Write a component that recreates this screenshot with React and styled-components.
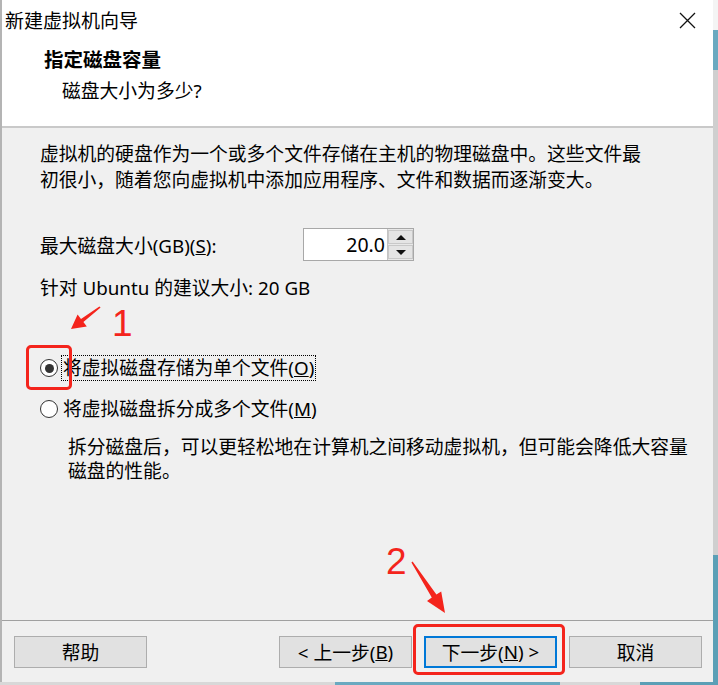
import React from "react";
import styled, { createGlobalStyle } from "styled-components";

const GlobalStyle = createGlobalStyle`
  html, body {
    margin: 0;
    padding: 0;
  }
  body {
    font-family: "Noto Sans", "Noto Sans CJK SC", sans-serif;
    color: #000;
  }
`;

const Screen = styled.div`
  position: relative;
  width: 718px;
  height: 685px;
  overflow: hidden;
  background:
    linear-gradient(to bottom, #f4f4f4 0 30px, #6aa9c0 30px 70px, #cfcfcf 70px 555px, #5b9fb6 555px) right top / 5px 685px no-repeat,
    linear-gradient(to right, #d8d8d8 0 335px, #6aa9c0 335px 560px, #d8d8d8 560px 640px, #5b9fb6 640px) left bottom / 718px 3px no-repeat,
    #d8d8d8;
`;

const Window = styled.div`
  box-sizing: border-box;
  width: 713px;
  height: 682px;
  display: flex;
  flex-direction: column;
  background: #f0f0f0;
  border-left: 2px solid #b4b4b4;
`;

const TitleBar = styled.div`
  height: 40px;
  display: flex;
  align-items: center;
  justify-content: space-between;
  padding: 0 17px 0 3px;
  background: #fff;
  font-size: 19px;
`;

const CloseIcon = styled.svg`
  width: 17px;
  height: 17px;
`;

const Header = styled.div`
  background: #fff;
  height: 88px;
  box-sizing: border-box;
  padding: 8px 0 0 42px;
  border-bottom: 2px solid #c9c9c9;
`;

const HeaderTitle = styled.div`
  font-size: 19.5px;
  font-weight: 700;
  line-height: 24px;
`;

const HeaderSub = styled.div`
  margin: 7px 0 0 18px;
  font-size: 18.8px;
  line-height: 24px;
`;

const Body = styled.div`
  flex: 1;
  padding: 13px 0 0 38px;
  font-size: 18.8px;
`;

const Paragraph = styled.p`
  margin: 0;
  line-height: 26px;
  white-space: nowrap;
`;

const SizeRow = styled.div`
  display: grid;
  grid-template-columns: 263px auto;
  align-items: center;
  margin-top: 35px;
  height: 33px;
`;

const SpinBox = styled.div`
  display: flex;
  width: 111px;
  height: 33px;
  box-sizing: border-box;
  border: 1px solid #a8a8a8;
  background: #fff;
`;

const SpinValue = styled.div`
  flex: 1;
  text-align: right;
  padding-right: 2px;
  line-height: 31px;
  font-size: 19.5px;
`;

const SpinButtons = styled.div`
  width: 25px;
  display: flex;
  flex-direction: column;
  gap: 1px;
  padding: 1px 0;
  background: #e8e8e8;
  border-left: 1px solid #c4c4c4;
`;

const SpinButton = styled.div`
  flex: 1;
  display: flex;
  align-items: center;
  justify-content: center;
  background: #e4e4e4;
  border: 1px solid #c8c8c8;
  &::after {
    content: "";
    border-left: 5px solid transparent;
    border-right: 5px solid transparent;
    ${(p) =>
      p.$down
        ? "border-top: 5px solid #111;"
        : "border-bottom: 5px solid #111;"}
  }
`;

const Line = styled.div`
  line-height: 26px;
  margin-top: ${(p) => p.$top || 0}px;
`;

const RadioRow = styled.label`
  display: flex;
  align-items: center;
  height: 26px;
  margin-top: ${(p) => p.$top}px;
`;

const RadioDot = styled.span`
  box-sizing: border-box;
  width: 18px;
  height: 18px;
  border-radius: 50%;
  border: 1.5px solid #333;
  background: #fff;
  margin-right: 4px;
  display: flex;
  align-items: center;
  justify-content: center;
  &::after {
    content: "";
    width: 9px;
    height: 9px;
    border-radius: 50%;
    background: ${(p) => (p.$checked ? "#333" : "transparent")};
  }
`;

const RadioText = styled.span`
  line-height: 24px;
  padding: 0 1px;
  outline: ${(p) => (p.$focus ? "1px dotted #000" : "none")};
`;

const Desc = styled.div`
  margin: 13px 0 0 28px;
  line-height: 24px;
  white-space: nowrap;
`;

const Footer = styled.div`
  display: flex;
  align-items: center;
  gap: 12px;
  padding: 15px 11px 14px 12px;
  border-top: 1px solid #a0a0a0;
`;

const Button = styled.div`
  box-sizing: border-box;
  width: 133px;
  height: 32px;
  display: flex;
  align-items: center;
  justify-content: center;
  background: #e1e1e1;
  border: ${(p) => (p.$primary ? "2px solid #0078d7" : "1px solid #adadad")};
  font-size: 18.8px;
  margin-left: ${(p) => (p.$push ? "auto" : "0")};
`;

const Marker = styled.div`
  position: absolute;
  box-sizing: border-box;
  border: 3px solid #f4241c;
  border-radius: 5px;
  left: ${(p) => p.$x}px;
  top: ${(p) => p.$y}px;
  width: ${(p) => p.$w}px;
  height: ${(p) => p.$h}px;
`;

const Num = styled.div`
  position: absolute;
  left: ${(p) => p.$x}px;
  top: ${(p) => p.$y}px;
  color: #f4241c;
  font-family: "Liberation Sans", sans-serif;
  font-size: 37px;
  line-height: 37px;
`;

const Arrow = styled.svg`
  position: absolute;
  left: 0;
  top: 0;
  width: 718px;
  height: 685px;
  pointer-events: none;
`;

export default function App() {
  return (
    <>
      <GlobalStyle />
      <Screen>
        <Window>
          <TitleBar>
            <span>新建虚拟机向导</span>
            <CloseIcon viewBox="0 0 17 17">
              <path d="M1 1 L16 16 M16 1 L1 16" stroke="#111" strokeWidth="1.3" />
            </CloseIcon>
          </TitleBar>
          <Header>
            <HeaderTitle>指定磁盘容量</HeaderTitle>
            <HeaderSub>磁盘大小为多少?</HeaderSub>
          </Header>
          <Body>
            <Paragraph>
              虚拟机的硬盘作为一个或多个文件存储在主机的物理磁盘中。这些文件最
              <br />
              初很小，随着您向虚拟机中添加应用程序、文件和数据而逐渐变大。
            </Paragraph>
            <SizeRow>
              <span>
                最大磁盘大小(GB)(<u>S</u>):
              </span>
              <SpinBox>
                <SpinValue>20.0</SpinValue>
                <SpinButtons>
                  <SpinButton />
                  <SpinButton $down />
                </SpinButtons>
              </SpinBox>
            </SizeRow>
            <Line $top={14}>针对 Ubuntu 的建议大小: 20 GB</Line>
            <RadioRow $top={54}>
              <RadioDot $checked />
              <RadioText $focus>
                将虚拟磁盘存储为单个文件(<u>O</u>)
              </RadioText>
            </RadioRow>
            <RadioRow $top={15}>
              <RadioDot />
              <RadioText>
                将虚拟磁盘拆分成多个文件(<u>M</u>)
              </RadioText>
            </RadioRow>
            <Desc>
              拆分磁盘后，可以更轻松地在计算机之间移动虚拟机，但可能会降低大容量
              <br />
              磁盘的性能。
            </Desc>
          </Body>
          <Footer>
            <Button>帮助</Button>
            <Button $push>
              &lt; 上一步(<u>B</u>)
            </Button>
            <Button $primary>
              下一步(<u>N</u>) &gt;
            </Button>
            <Button>取消</Button>
          </Footer>
        </Window>

        <Marker $x={26} $y={345} $w={46} $h={45} />
        <Marker $x={413} $y={624} $w={152} $h={51} />
        <Num $x={112} $y={305}>1</Num>
        <Num $x={386} $y={543}>2</Num>
        <Arrow viewBox="0 0 718 685">
          <polygon
            points="100.6,307.6 83.4,322.1 86.8,326.4 71,329 77.6,314.6 81,318.9 99.4,306.4"
            fill="#f4241c"
          />
          <polygon
            points="412.6,561.6 436.4,594.6 441.2,591.6 445,613 427,600.9 431.8,597.6 411.4,562.4"
            fill="#f4241c"
          />
        </Arrow>
      </Screen>
    </>
  );
}
